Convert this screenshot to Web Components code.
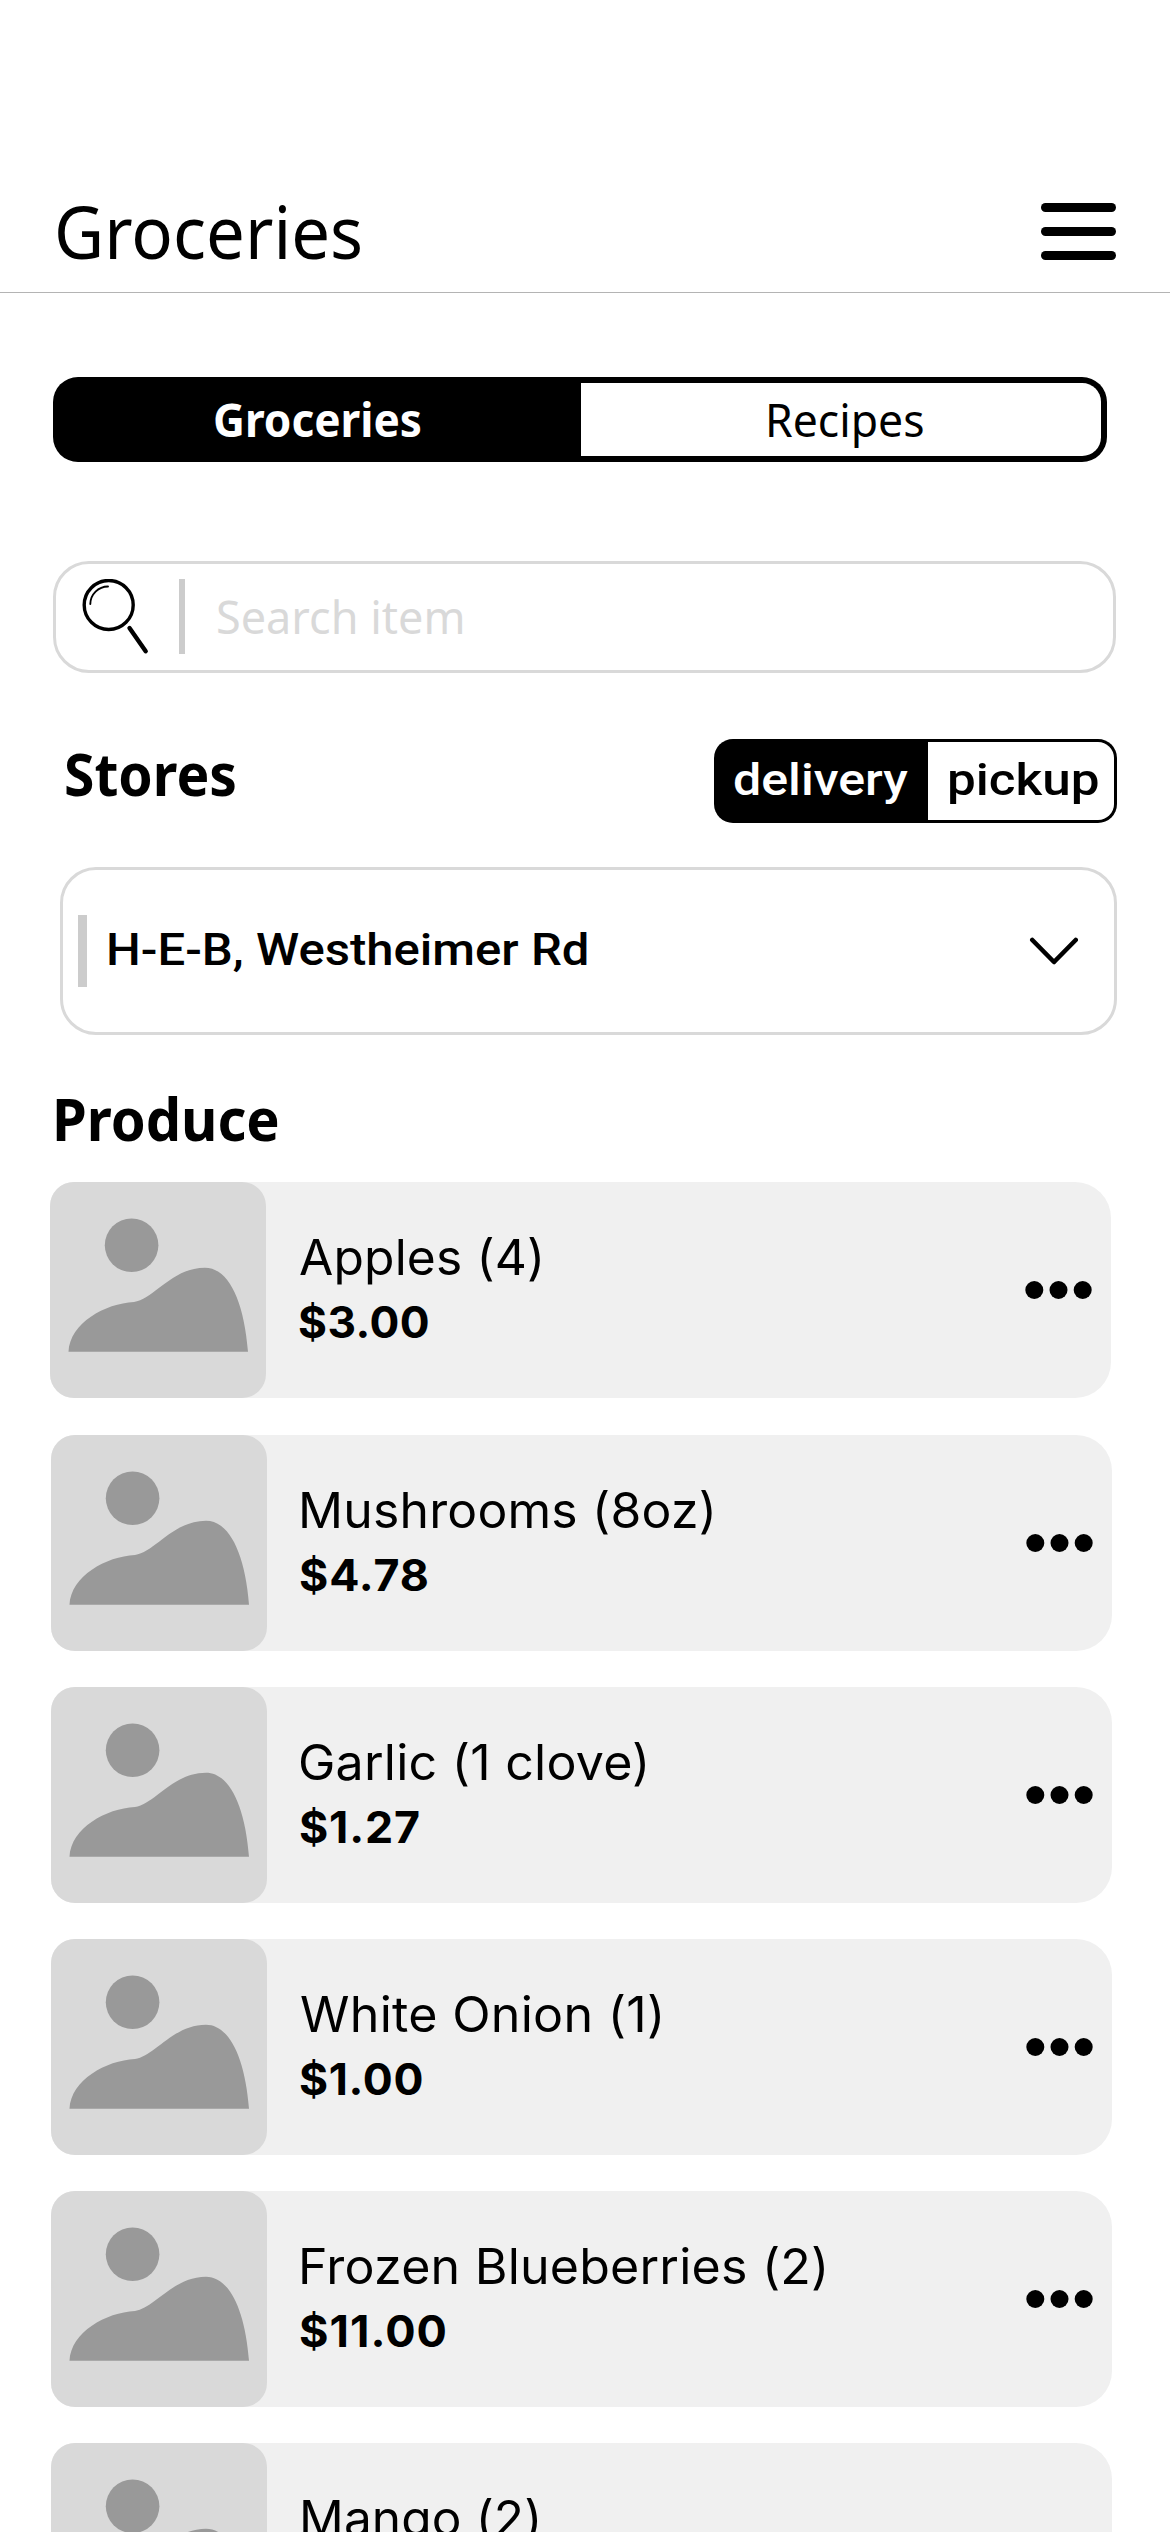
<!DOCTYPE html>
<html lang="en">
<head>
<meta charset="utf-8">
<title>Groceries</title>
<style>
body{margin:0;background:#fff;color:#000;height:2532px;overflow:hidden}
</style>
</head>
<body>
<grocery-app></grocery-app>
<script>
const ctx = document.createElement('canvas').getContext('2d');

class Base extends HTMLElement {
  render(css, html) {
    const root = this.attachShadow({ mode: 'open' });
    const t = document.createElement('template');
    t.innerHTML = `<style>*{box-sizing:border-box}:host{box-sizing:border-box}svg{display:block}${css}</style>${html}`;
    root.append(t.content.cloneNode(true));
    return root;
  }
}

/* A text whose box is its cap height (cap) by its ink width (ink).
   track (0..1) is the share of the width difference spread over letter gaps;
   the rest stretches the glyphs. */
class CapText extends Base {
  connectedCallback() {
    if (this.shadowRoot) return;
    const root = this.render(`:host{display:block;flex:none;white-space:pre;font-optical-sizing:none}
      span{display:inline-block;transform-origin:0 0}`, `<span><slot></slot></span>`);
    const span = root.querySelector('span');
    const cap = +this.getAttribute('cap'), ink = +this.getAttribute('ink');
    const weight = this.getAttribute('weight') || '400';
    const family = this.getAttribute('family') || '"Noto Sans","Open Sans",sans-serif';
    const track = +(this.getAttribute('track') || 0);
    const text = this.textContent;
    ctx.font = `${weight} 1000px ${family}`;
    const ratio = ctx.measureText('H').actualBoundingBoxAscent / 1000;
    const size = cap / ratio;
    const m = ctx.measureText(text), k = size / 1000;
    const left = -m.actualBoundingBoxLeft * k;
    const bearings = (m.width - m.actualBoundingBoxRight - m.actualBoundingBoxLeft) * k;
    const A = Math.round(m.fontBoundingBoxAscent * k), D = Math.round(m.fontBoundingBoxDescent * k);
    span.style.font = `${weight} ${size}px/${cap}px ${family}`;
    const natural = span.getBoundingClientRect().width - bearings;
    const spacing = track * (ink - natural) / (text.length - 1);
    const scale = ink / (natural + spacing * (text.length - 1));
    this.style.cssText += `;width:${ink}px;height:${cap}px;line-height:0`;
    span.style.cssText = `font:${weight} ${size}px/${cap}px ${family};letter-spacing:${spacing}px;` +
      `margin-top:${cap - ((cap - A - D) / 2 + A)}px;margin-left:${-left * scale}px;transform:scaleX(${scale})`;
  }
}

class AppHeader extends Base {
  connectedCallback() {
    this.render(`:host{display:flex;justify-content:space-between;align-items:flex-start;height:293px;
      padding:203px 54px 0 57.5px;border-bottom:1px solid #b4b4b4}
      cap-text{margin-top:3px}`,
      `<cap-text cap="53" ink="303">${this.textContent}</cap-text>
      <svg width="75" height="57"><rect width="75" height="9" rx="4.5"/><rect y="24" width="75" height="9" rx="4.5"/><rect y="48" width="75" height="9" rx="4.5"/></svg>`);
  }
}

class SegmentTabs extends Base {
  connectedCallback() {
    this.render(`:host{display:flex;padding:var(--line);border-radius:var(--radius);background:#000}
      ::slotted(*){display:flex;align-items:center;justify-content:center}
      ::slotted([active]){color:#fff}
      ::slotted(:not([active])){background:#fff;border-radius:0 calc(var(--radius) - var(--line)) calc(var(--radius) - var(--line)) 0}`, `<slot></slot>`);
  }
}

class SearchBox extends Base {
  connectedCallback() {
    this.render(`:host{display:flex;align-items:flex-start;height:111.5px;border:3px solid #d9d9d9;border-radius:36px;padding:15px 0 0 26px}
      i{width:6px;height:75px;background:#ccc;margin-left:28.5px}
      cap-text{margin:22.5px 0 0 34px;color:#d9d9d9}`,
      `<svg width="68" height="78" viewBox="82 579 68 78" fill="none" stroke="#000" stroke-linecap="round">
        <circle cx="108.7" cy="605" r="24.5" stroke-width="3.4"/>
        <path d="M90.3 604A17.8 17.8 0 0 1 108 586.5" stroke-width="1.9"/>
        <path d="M129.5 628L145.7 651.3" stroke-width="4.4"/></svg>
      <i></i><cap-text cap="33" ink="244">${this.getAttribute('placeholder')}</cap-text>`);
  }
}

class StoreSelect extends Base {
  connectedCallback() {
    this.render(`:host{display:flex;align-items:center;height:168px;border:3px solid #d9d9d9;border-radius:36px;padding-left:15px}
      i{width:9px;height:72px;background:#ccc}
      cap-text{margin:0 0 3px 22px}
      svg{margin:0 35px 0 auto}`,
      `<i></i><cap-text cap="32.5" ink="478" weight="500" family="Roboto,sans-serif">${this.textContent}</cap-text>
      <svg width="50" height="28" viewBox="0 0 50 28" fill="none" stroke="#000" stroke-width="4.6" stroke-linecap="round" stroke-linejoin="round"><path d="M3.3 3L25 25L46.7 3"/></svg>`);
  }
}

class ItemThumb extends Base {
  connectedCallback() {
    this.render(`:host{display:block;width:216px;height:216px;border-radius:24px;background:#d9d9d9;flex:none}`,
      `<svg width="216" height="216" fill="#999"><circle cx="81.6" cy="63.3" r="26.8"/>
      <path d="M18.5 169.7C20 141 55 121.5 84 120C104 117 122 85.7 155 85.7C178 85.7 194 118 198 169.7Z"/></svg>`);
  }
}

class GroceryItem extends Base {
  connectedCallback() {
    const a = n => this.getAttribute(n);
    this.render(`:host{display:flex;width:1060.5px;height:216px;border-radius:24px 36px 36px 24px;background:#f0f0f0}
      .info{display:flex;flex-direction:column;padding:58px 0 0 33.2px;gap:30.2px}
      .name{margin-left:${a('indent') || 0}px}
      .dots{margin:99px 19px 0 auto}`,
      `<item-thumb></item-thumb><div class="info">
        <cap-text class="name" cap="36" ink="${a('name-ink')}" track="0.3" family="Inter,sans-serif">${a('name')}</cap-text>
        ${a('price') ? `<cap-text cap="32" ink="${a('price-ink')}" track="0.5" weight="700" family="Inter,sans-serif">${a('price')}</cap-text>` : ''}</div>
      <svg class="dots" width="67" height="18"><circle cx="9.3" cy="9" r="9"/><circle cx="33.5" cy="9" r="9"/><circle cx="57.7" cy="9" r="9"/></svg>`);
  }
}

class GroceryApp extends Base {
  connectedCallback() {
    this.render(`:host{display:flex;flex-direction:column;width:1170px;height:2532px;overflow:hidden}
      app-header,.main,search-box,.stores,store-select,.produce,.list{flex:none}
      .main{--line:6.2px;--radius:25px;width:1054px;height:84.5px;margin:84.2px 0 0 52.8px}
      .main>:first-child{width:522px;padding-right:5px}.main>:last-child{flex:1;padding-left:9.5px}
      .main cap-text{margin-top:3px}
      search-box{width:1063px;margin:99.5px 0 0 53px}
      .stores{display:flex;justify-content:space-between;align-items:flex-start;margin:66.5px 53px 0 66px}
      .stores>cap-text{margin-top:15px}
      .mode{--line:3px;--radius:19px;width:403px;height:84px}
      .mode>:first-child{width:210.5px;padding-right:2px}.mode>:last-child{flex:1;padding-left:5px}
      .mode cap-text{margin-top:-2.5px}
      store-select{width:1057px;margin:44px 0 0 60px}
      .produce{margin:64.5px 0 0 56.3px}
      .list{display:flex;flex-direction:column;gap:36px;margin:40.3px 0 0 51.2px}
      .list>:first-child{margin:0 0 1px -1px}`,
      `<app-header>Groceries</app-header>
      <segment-tabs class="main">
        <div active><cap-text cap="33" ink="205.5" weight="700">Groceries</cap-text></div>
        <div><cap-text cap="33" ink="153.5" weight="400">Recipes</cap-text></div>
      </segment-tabs>
      <search-box placeholder="Search item"></search-box>
      <div class="stores"><cap-text cap="42" ink="169.5" weight="700">Stores</cap-text>
        <segment-tabs class="mode">
          <div active><cap-text cap="32.5" ink="173" weight="500" family="Roboto,sans-serif">delivery</cap-text></div>
          <div><cap-text cap="32.5" ink="148.5" weight="500" family="Roboto,sans-serif">pickup</cap-text></div>
        </segment-tabs></div>
      <store-select>H-E-B, Westheimer Rd</store-select>
      <cap-text class="produce" cap="42" ink="221.5" weight="700">Produce</cap-text>
      <div class="list">
        <grocery-item name="Apples (4)" name-ink="240.5" price="$3.00" price-ink="128.8"></grocery-item>
        <grocery-item name="Mushrooms (8oz)" indent="1.5" name-ink="410" price="$4.78" price-ink="126.5"></grocery-item>
        <grocery-item name="Garlic (1 clove)" name-ink="345" price="$1.27" price-ink="118"></grocery-item>
        <grocery-item name="White Onion (1)" name-ink="359.5" price="$1.00" price-ink="121.5"></grocery-item>
        <grocery-item name="Frozen Blueberries (2)" indent="2" name-ink="522.5" price="$11.00" price-ink="145"></grocery-item>
        <grocery-item name="Mango (2)" indent="2" name-ink="234.5"></grocery-item>
      </div>`);
  }
}

for (const [n, c] of Object.entries({ 'cap-text': CapText, 'app-header': AppHeader, 'segment-tabs': SegmentTabs, 'search-box': SearchBox,
  'store-select': StoreSelect, 'item-thumb': ItemThumb, 'grocery-item': GroceryItem, 'grocery-app': GroceryApp })) customElements.define(n, c);
</script>
</body>
</html>
